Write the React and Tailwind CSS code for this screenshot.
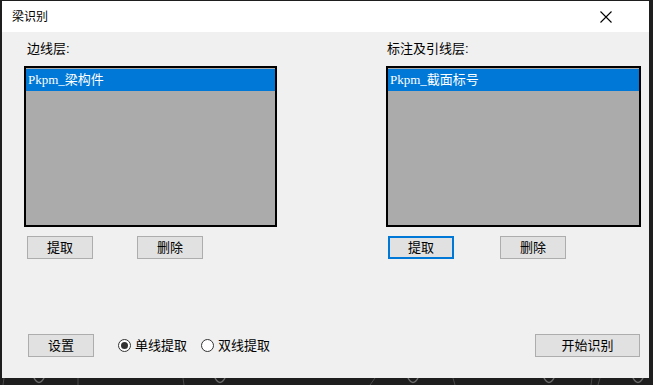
const cjk = { fontFamily: '"Liberation Sans", "Noto Sans CJK SC", sans-serif' }
const listFont = { fontFamily: '"Liberation Serif", "Noto Sans CJK SC", serif' }

function Button({ children, focused, className = '' }) {
  return (
    <button
      className={`flex h-[23px] w-[66px] items-center justify-center bg-[#e1e1e1] text-[13px] text-black ${
        focused ? 'border-2 border-[#0078d7]' : 'border border-[#adadad]'
      } ${className}`}
    >
      {children}
    </button>
  )
}

function LayerList({ item }) {
  return (
    <div className="h-[161px] border-2 border-black bg-[#ababab]">
      <div className="mt-px flex h-[22px] items-center bg-[#0078d7] pl-[2px] text-[13px] text-white" style={listFont}>
        {item}
      </div>
    </div>
  )
}

function Radio({ checked, label }) {
  return (
    <label className="flex items-center gap-[4px] text-[13px] text-black">
      <span className="flex h-[13px] w-[13px] items-center justify-center rounded-full border border-[#333] bg-white">
        {checked && <span className="h-[7px] w-[7px] rounded-full bg-[#333]" />}
      </span>
      {label}
    </label>
  )
}

export default function App() {
  return (
    <div className="flex h-[385px] w-[653px] flex-col bg-[#1e1e1e]" style={cjk}>
      <div className="ml-[2px] mt-px flex h-[377px] w-[647px] flex-col">
        <div className="flex h-[31px] items-center justify-between bg-white pl-[10px] pr-[37px]">
          <span className="text-[12px] text-black">梁识别</span>
          <svg width="12" height="12" viewBox="0 0 12 12">
            <path d="M0.5 0.5 L11.5 11.5 M11.5 0.5 L0.5 11.5" stroke="#000" strokeWidth="1.1" />
          </svg>
        </div>

        <div className="flex flex-1 flex-col bg-[#f0f0f0] pl-[22px] pr-[8px] pt-[9px]">
          <div className="flex gap-[109px]">
            <div className="flex w-[253px] flex-col">
              <span className="mb-[9px] h-[16px] pl-[3px] text-[13px] leading-[16px] text-black">边线层:</span>
              <LayerList item="Pkpm_梁构件" />
              <div className="mt-[9px] flex gap-[44px] pl-[3px]">
                <Button>提取</Button>
                <Button>删除</Button>
              </div>
            </div>
            <div className="flex w-[255px] flex-col">
              <span className="mb-[9px] h-[16px] pl-[1px] text-[13px] leading-[16px] text-black">标注及引线层:</span>
              <LayerList item="Pkpm_截面标号" />
              <div className="mt-[9px] flex gap-[46px] pl-[2px]">
                <Button focused>提取</Button>
                <Button>删除</Button>
              </div>
            </div>
          </div>

          <div className="mt-[75px] flex items-center">
            <Button className="ml-[4px]">设置</Button>
            <div className="ml-[24px] flex items-center gap-[14px]">
              <Radio checked label="单线提取" />
              <Radio label="双线提取" />
            </div>
            <button className="ml-auto mr-[1px] flex h-[23px] w-[105px] items-center justify-center border border-[#adadad] bg-[#e1e1e1] text-[13px] text-black">
              开始识别
            </button>
          </div>
        </div>
      </div>
      <svg width="653" height="7" viewBox="0 0 653 7" className="block">
        <g fill="none" stroke="#6a6a6a" strokeWidth="1.5">
          <path d="M34 0 Q39 9 44 0" />
          <path d="M215 0 Q220 9 225 0" />
          <path d="M408 0 Q413 9 418 0" />
          <path d="M544 0 Q549 9 554 0" />
          <path d="M633 0 Q638 9 643 0" />
        </g>
        <g stroke="#4a4a4a" strokeWidth="1">
          <path d="M4 0 L3 7" />
          <path d="M78 0 L78 7" />
          <path d="M183 0 L184 7" />
          <path d="M375 0 L370 7" />
          <path d="M453 0 L455 7" />
          <path d="M592 0 L591 7" />
          <path d="M600 0 L598 7" />
        </g>
      </svg>
    </div>
  )
}
